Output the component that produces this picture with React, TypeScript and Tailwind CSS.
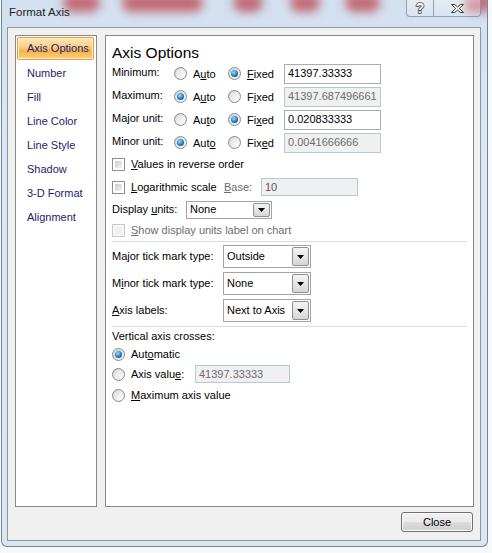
import React from "react";

// radio button, win7 style
const Radio = ({ checked }: { checked?: boolean }) => (
  <span className="flex h-[13px] w-[13px] shrink-0 items-center justify-center rounded-full border border-[#8b8b8b] bg-[linear-gradient(135deg,#cfd1d4,#fafafa)]">
    {checked ? (
      <span className="h-[7px] w-[7px] rounded-full bg-[radial-gradient(circle_at_40%_35%,#a5dcf7,#1f7cc0_55%,#0b3d70)]" />
    ) : (
      <span className="h-[9px] w-[9px] rounded-full bg-[linear-gradient(135deg,#dcdde0,#ffffff)]" />
    )}
  </span>
);

const Check = ({ disabled }: { disabled?: boolean }) => (
  <span
    className={`flex h-[13px] w-[13px] shrink-0 p-[2px] border ${
      disabled ? "border-[#c9c9c9] bg-[#f7f7f7]" : "border-[#8e8f8f] bg-white"
    }`}
  >
    <span
      className={`block h-full w-full ${
        disabled ? "bg-[#efefef]" : "bg-[linear-gradient(135deg,#c9ccd2,#f4f4f4)]"
      }`}
    />
  </span>
);

const Field = ({
  value,
  disabled,
  className,
}: {
  value: string;
  disabled?: boolean;
  className: string;
}) => (
  <div
    className={`flex shrink-0 items-center border pl-[3px] text-[11px] ${
      disabled
        ? "border-[#b5c7da] bg-[#f0f0f0] text-[#6d6d6d]"
        : "border-[#abadb3] bg-white text-black"
    } ${className}`}
  >
    {value}
  </div>
);

const Select = ({ value, className }: { value: string; className: string }) => (
  <div
    className={`flex shrink-0 items-center justify-between border border-[#a4a4a4] bg-white py-[1px] pl-[3px] pr-[1px] ${className}`}
  >
    <span>{value}</span>
    <span className="flex h-full w-[17px] items-center justify-center rounded-[2px] border border-[#8e8f8f] bg-[linear-gradient(180deg,#f4f4f4,#e6e6e6_50%,#d6d6d6)]">
      <svg width="7" height="4" viewBox="0 0 7 4">
        <path d="M0 0h7L3.5 4z" fill="#000" />
      </svg>
    </span>
  </div>
);

const U = ({ children }: { children: React.ReactNode }) => (
  <span className="underline underline-offset-[1px]">{children}</span>
);

const navItems = ["Number", "Fill", "Line Color", "Line Style", "Shadow", "3-D Format", "Alignment"];

const blobs = [
  "left-[61px] w-[37px]",
  "left-[120px] w-[81px]",
  "left-[231px] w-[30px]",
  "left-[288px] w-[30px]",
  "left-[343px] w-[35px]",
  "left-[462px] w-[30px]",
];

const AxisRow = ({
  label,
  auto,
  fixed,
  fixedOn,
  value,
}: {
  label: string;
  auto: React.ReactNode;
  fixed: React.ReactNode;
  fixedOn: boolean;
  value: string;
}) => (
  <div className="flex h-[23px] items-center">
    <span className="mb-[3px] w-[62px] shrink-0">{label}</span>
    <div className="flex w-[54px] shrink-0 items-center gap-[6px]">
      <Radio checked={!fixedOn} />
      <span className="mt-[1px]">{auto}</span>
    </div>
    <div className="flex w-[56px] shrink-0 items-center gap-[6px]">
      <Radio checked={fixedOn} />
      <span className="mt-[1px]">{fixed}</span>
    </div>
    <Field className="h-[20px] w-[97px]" value={value} disabled={!fixedOn} />
  </div>
);

export default function App() {
  return (
    <div className="relative h-[553px] w-[492px] overflow-hidden bg-[#f6f8fa] font-['Liberation_Sans',Arial,sans-serif] text-[11px] text-black">
      <div className="relative ml-[1px] flex h-[547px] w-[487px] flex-col overflow-hidden rounded-b-[6px] border border-t-0 border-[#72839a] bg-[linear-gradient(180deg,#d3e0ef,#dde8f4_30%,#dbe6f2)] pb-[5px] pl-[5px] pr-[6px]">
        {blobs.map((b) => (
          <div
            key={b}
            className={`pointer-events-none absolute top-[-6px] h-[18px] rounded-full bg-[#bd4c58]/80 blur-[5px] ${b}`}
          />
        ))}

        {/* title bar */}
        <div className="relative flex h-[27px] shrink-0 justify-between">
          <span className="self-center pb-[2px] pl-[2px] text-[11.5px] text-[#1e1e1e]">Format Axis</span>
          <div className="flex h-[17px] overflow-hidden rounded-b-[4px] border border-t-0 border-[#7d8ea3]/80 bg-[linear-gradient(180deg,#ffffff66,#ffffff22)]">
            <div className="flex w-[27px] items-center justify-center border-r border-[#7d8ea3]/80 text-[14px] font-bold leading-none text-white [-webkit-text-stroke:1.5px_#3d3d3d] [paint-order:stroke_fill]">
              ?
            </div>
            <div className="flex w-[46px] items-center justify-center">
              <svg width="15" height="11" viewBox="0 0 15 11">
                <path
                  d="M1.5 1.5h3.2L7.5 4l2.8-2.5h3.2L9.3 5.5l4.2 4h-3.2L7.5 7l-2.8 2.5H1.5l4.2-4z"
                  fill="#fff"
                  stroke="#3a3a3a"
                  strokeWidth="1"
                  strokeLinejoin="round"
                />
              </svg>
            </div>
          </div>
        </div>

        {/* dialog body */}
        <div className="flex h-[514px] shrink-0 flex-col border border-[#8a96a4] bg-[#f0f0f0] pb-[8px] pl-[7px] pr-[6px] pt-[7px]">
          <div className="flex h-[472px] gap-[8px]">
            {/* nav list */}
            <div className="w-[82px] shrink-0 border border-[#828790] bg-white pt-[1px] text-[#1e1b6e]">
              <div className="h-[24px]">
                <div className="ml-[1px] flex h-[23px] w-[77px] items-center rounded-[2px] border border-[#dea046] bg-[linear-gradient(180deg,#fee6b4,#fbd08a_40%,#f6b24c_62%,#fbd27c)] pl-[9px] shadow-[inset_0_0_0_1px_#fff0cc]">
                  Axis Options
                </div>
              </div>
              {navItems.map((n) => (
                <div key={n} className="flex h-[24px] items-center pl-[11px]">
                  {n}
                </div>
              ))}
            </div>

            {/* options */}
            <div className="flex w-[369px] shrink-0 flex-col border border-[#828790] bg-white pl-[6px]">
              <div className="mt-[8px] h-[18px] text-[15.5px] leading-[18px]">Axis Options</div>

              <AxisRow label="Minimum:" auto={<>A<U>u</U>to</>} fixed={<><U>F</U>ixed</>} fixedOn value="41397.33333" />
              <AxisRow label="Maximum:" auto={<>A<U>u</U>to</>} fixed={<>F<U>i</U>xed</>} fixedOn={false} value="41397.687496661" />
              <AxisRow label="Major unit:" auto={<>Au<U>t</U>o</>} fixed={<>Fi<U>x</U>ed</>} fixedOn value="0.020833333" />
              <AxisRow label="Minor unit:" auto={<>Aut<U>o</U></>} fixed={<>Fix<U>e</U>d</>} fixedOn={false} value="0.0041666666" />

              <div className="flex h-[21px] items-center gap-[6px]">
                <Check />
                <span><U>V</U>alues in reverse order</span>
              </div>
              <div className="flex h-[24px] items-center">
                <div className="flex w-[112px] shrink-0 items-center gap-[6px]">
                  <Check />
                  <span><U>L</U>ogarithmic scale</span>
                </div>
                <span className="w-[37px] shrink-0 text-[#6d6d6d]"><U>B</U>ase:</span>
                <Field className="h-[18px] w-[97px] text-[#555]" value="10" disabled />
              </div>
              <div className="flex h-[21px] items-center">
                <span className="w-[74px] shrink-0">Display <U>u</U>nits:</span>
                <Select className="h-[18px] w-[86px]" value="None" />
              </div>
              <div className="flex h-[21px] items-center gap-[6px] text-[#6d6d6d]">
                <Check disabled />
                <span><U>S</U>how display units label on chart</span>
              </div>

              <div className="mr-[6px] border-t border-[#dcdcdc]" />

              <div className="mt-[3px] flex flex-col gap-[4px]">
                <div className="flex h-[23px] items-center">
                  <span className="w-[111px] shrink-0">Major tick mark type:</span>
                  <Select className="h-[23px] w-[88px]" value="Outside" />
                </div>
                <div className="flex h-[23px] items-center">
                  <span className="w-[111px] shrink-0">M<U>i</U>nor tick mark type:</span>
                  <Select className="h-[23px] w-[88px]" value="None" />
                </div>
                <div className="flex h-[23px] items-center">
                  <span className="w-[111px] shrink-0"><U>A</U>xis labels:</span>
                  <Select className="h-[23px] w-[88px]" value="Next to Axis" />
                </div>
              </div>

              <div className="mr-[6px] mt-[4px] border-t border-[#dcdcdc]" />

              <div className="flex h-[18px] items-center">Vertical axis crosses:</div>
              <div className="flex h-[18px] items-center gap-[6px]">
                <Radio checked />
                <span>Aut<U>o</U>matic</span>
              </div>
              <div className="flex h-[22px] items-center">
                <div className="flex w-[83px] shrink-0 items-center gap-[6px]">
                  <Radio />
                  <span>Axis valu<U>e</U>:</span>
                </div>
                <Field className="h-[18px] w-[95px]" value="41397.33333" disabled />
              </div>
              <div className="flex h-[20px] items-center gap-[6px]">
                <Radio />
                <span><U>M</U>aximum axis value</span>
              </div>
            </div>
          </div>

          <div className="mt-[5px] flex justify-end pr-[1px]">
            <button className="h-[20px] w-[72px] rounded-[3px] border border-[#707070] bg-[linear-gradient(180deg,#f2f2f2,#ebebeb_50%,#dddddd_50%,#cfcfcf)] text-[11px] text-black shadow-[inset_0_0_0_1px_#fbfbfb]">
              Close
            </button>
          </div>
        </div>
      </div>
    </div>
  );
}
